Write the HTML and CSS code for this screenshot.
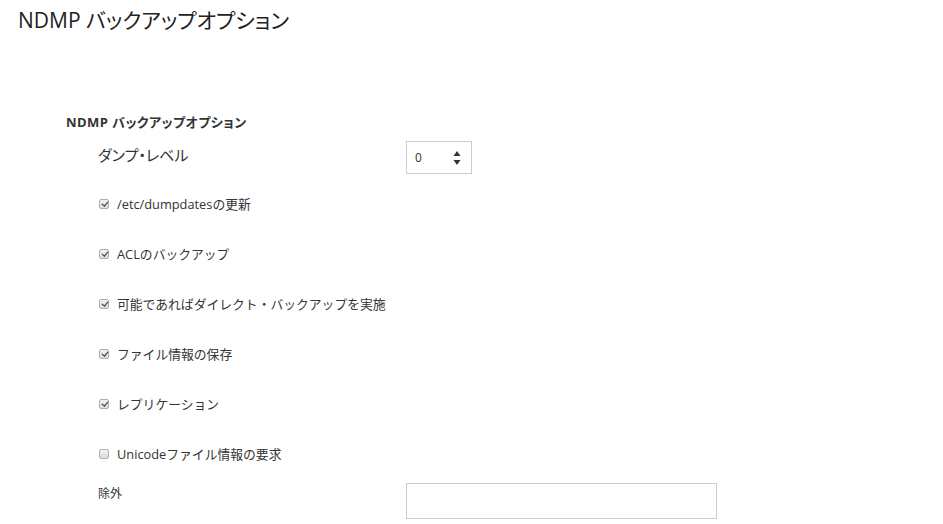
FILE: index.html
```html
<!DOCTYPE html>
<html lang="ja">
<head>
<meta charset="utf-8">
<title>NDMP バックアップオプション</title>
<link rel="stylesheet" href="styles.css">
</head>
<body>
<h1 class="page-title">NDMP バックアップオプション</h1>
<section class="options">
  <h2 class="section-title">NDMP バックアップオプション</h2>
  <div class="rows">
    <div class="row row-dump">
      <span class="field-label label-dump">ダンプ・レベル</span>
      <div class="spinner">
        <span class="spinner-value">0</span>
        <svg class="spinner-arrows" width="8" height="16" viewBox="0 0 8 16">
          <path d="M4 1 L7.5 6 L0.5 6 Z" fill="#333"/>
          <path d="M0.5 10 L7.5 10 L4 15 Z" fill="#333"/>
        </svg>
      </div>
    </div>
    <label class="row row-check"><span class="cb checked"></span><span class="cb-label">/etc/dumpdatesの更新</span></label>
    <label class="row row-check"><span class="cb checked"></span><span class="cb-label">ACLのバックアップ</span></label>
    <label class="row row-check"><span class="cb checked"></span><span class="cb-label">可能であればダイレクト・バックアップを実施</span></label>
    <label class="row row-check"><span class="cb checked"></span><span class="cb-label">ファイル情報の保存</span></label>
    <label class="row row-check"><span class="cb checked"></span><span class="cb-label">レプリケーション</span></label>
    <label class="row row-check"><span class="cb"></span><span class="cb-label">Unicodeファイル情報の要求</span></label>
    <div class="row row-exclude">
      <span class="field-label label-exclude">除外</span>
      <div class="text-input"></div>
    </div>
  </div>
</section>
</body>
</html>
```
FILE: styles.css
```css
html, body {
  margin: 0;
  padding: 0;
  background: #fff;
}
body {
  font-family: "Open Sans", "Noto Sans CJK JP", sans-serif;
  color: #333;
  width: 943px;
  height: 524px;
  overflow: hidden;
}
.page-title {
  margin: 0;
  padding: 8px 0 0 18px;
  font-size: 21px;
  line-height: 24px;
  font-weight: 400;
  color: #222;
  font-feature-settings: "palt";
}
.options {
  padding: 80px 0 0 66px;
}
.section-title {
  margin: 0;
  font-size: 13px;
  line-height: 20px;
  font-weight: 700;
  color: #333;
  font-feature-settings: "palt";
  letter-spacing: 0.45px;
}
.rows {
  padding-left: 32px;
  display: flex;
  flex-direction: column;
}
.row {
  display: flex;
  align-items: flex-start;
}
.field-label {
  width: 308px;
  line-height: 20px;
}
.row-dump {
  height: 47px;
  padding-top: 9px;
  box-sizing: border-box;
}
.label-dump {
  margin-top: 4px;
  font-size: 15px;
  font-feature-settings: "palt";
}
.spinner {
  width: 66px;
  height: 33px;
  box-sizing: border-box;
  border: 1px solid #ccc;
  display: flex;
  align-items: center;
  justify-content: space-between;
  padding: 0 10px 0 8px;
}
.spinner-value {
  font-size: 12px;
  color: #333;
}
.row-check {
  height: 50px;
  align-items: center;
  font-size: 12.8px;
}
.cb {
  width: 10px;
  height: 10px;
  box-sizing: border-box;
  border: 1px solid #b0b0b0;
  border-radius: 2px;
  background: linear-gradient(#f2f2f2, #dadada);
  margin: 0 8px 0 1px;
  position: relative;
}
.cb.checked::after {
  content: "";
  position: absolute;
  left: 2.5px;
  top: 0px;
  width: 2.5px;
  height: 5px;
  border: solid #333;
  border-width: 0 1.6px 1.6px 0;
  transform: rotate(40deg);
}
.cb-label {
  line-height: 20px;
}
.row-exclude {
  padding-top: 4px;
}
.label-exclude {
  margin-top: 1px;
  font-size: 12px;
}
.text-input {
  width: 311px;
  height: 36px;
  box-sizing: border-box;
  border: 1px solid #ccc;
}
```
